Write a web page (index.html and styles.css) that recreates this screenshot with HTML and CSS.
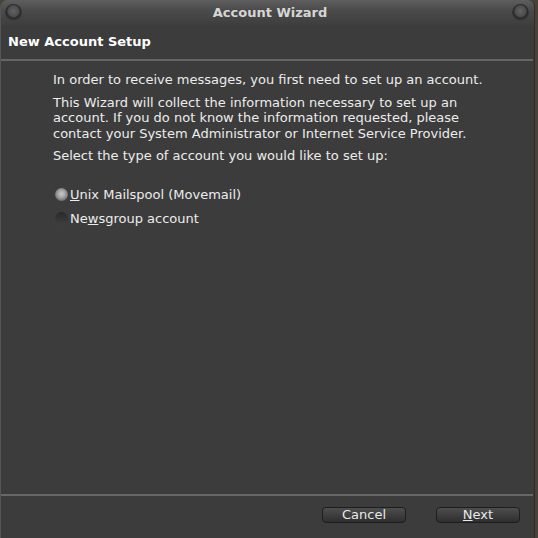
FILE: index.html
```html
<!DOCTYPE html>
<html>
<head>
<meta charset="utf-8">
<link rel="stylesheet" href="styles.css">
</head>
<body>
<div class="window">
  <div class="titlebar">
    <span class="knob"></span>
    <span class="title">Account Wizard</span>
    <span class="knob"></span>
  </div>
  <div class="header">New Account Setup</div>
  <div class="rule"></div>
  <div class="content">
    <p>In order to receive messages, you first need to set up an account.</p>
    <p>This Wizard will collect the information necessary to set up an account. If you do not know the information requested, please contact your System Administrator or Internet Service Provider.</p>
    <p>Select the type of account you would like to set up:</p>
    <div class="radios">
      <label class="radio"><span class="dot on"></span><span><u>U</u>nix Mailspool (Movemail)</span></label>
      <label class="radio"><span class="dot"></span><span>Ne<u>w</u>sgroup account</span></label>
    </div>
  </div>
  <div class="rule bottom"></div>
  <div class="buttons">
    <button class="btn">Cancel</button>
    <button class="btn"><u>N</u>ext</button>
  </div>
</div>
</body>
</html>
```
FILE: styles.css
```css
html, body {
  margin: 0;
  padding: 0;
  background: #4a4236;
  width: 538px;
  height: 538px;
  overflow: hidden;
}
* {
  box-sizing: border-box;
}
.window {
  width: 535px;
  height: 538px;
  background: #3c3c3c;
  border-radius: 7px 7px 0 0;
  display: flex;
  flex-direction: column;
  font-family: "DejaVu Sans", sans-serif;
  color: #ececec;
  font-size: 13px;
  border-left: 1px solid #555;
  border-right: 1px solid #2c2c2c;
  overflow: hidden;
}
.titlebar {
  height: 25px;
  flex: none;
  background: linear-gradient(#5e5e5e, #4b4b4b 40%, #3e3e3e);
  display: flex;
  align-items: center;
  justify-content: space-between;
  padding: 0 5px 0 4px;
}
.title {
  font-weight: bold;
  color: #d6d6d6;
  font-size: 13px;
  margin-left: 6px;
}
.knob {
  flex: none;
  width: 17px;
  height: 17px;
  border-radius: 50%;
  background: radial-gradient(circle at 50% 42%, #626262 0, #4c4c4c 42%, #2a2a2a 52%, #383838 70%, #555 100%);
}
.header {
  font-weight: bold;
  color: #ffffff;
  padding: 9px 7px 10px;
  font-size: 13px;
}
.rule {
  height: 2px;
  background: #666;
  margin: 0 1px 0 0;
  flex: none;
}
.content {
  flex: 1;
  padding: 11px 50px 0 52px;
}
.content p {
  margin: 0 0 7px;
  line-height: 15.5px;
}
.radios {
  margin-top: 23px;
  display: flex;
  flex-direction: column;
  gap: 8px;
}
.radio {
  display: flex;
  align-items: center;
  gap: 2px;
  height: 16px;
  margin-left: 2px;
}
.dot {
  flex: none;
  width: 13px;
  height: 13px;
  border-radius: 50%;
  background: linear-gradient(#2a2a2a, #363636 60%, #404040);
}
.dot.on {
  background: radial-gradient(circle at 50% 45%, #c8c8c8 0, #a8a8a8 35%, #6a6a6a 75%, #4a4a4a 100%);
}
.bottom {
  margin-top: auto;
}
.buttons {
  height: 42px;
  flex: none;
  display: flex;
  justify-content: flex-end;
  align-items: flex-start;
  gap: 30px;
  padding: 11px 14px 0 0;
}
.btn {
  width: 84px;
  height: 16px;
  padding: 0;
  font-family: "DejaVu Sans", sans-serif;
  font-size: 13px;
  color: #e8e8e8;
  line-height: 14px;
  border: 1px solid #1e1e1e;
  border-radius: 4px;
  background: linear-gradient(#4e4e4e, #2e2e2e);
}
```
